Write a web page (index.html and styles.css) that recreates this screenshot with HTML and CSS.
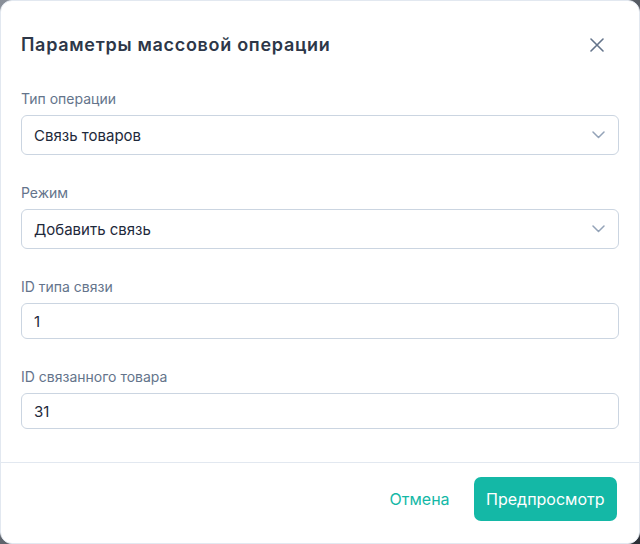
FILE: index.html
```html
<!DOCTYPE html>
<html lang="ru">
<head>
    <meta charset="UTF-8">
    <meta name="viewport" content="width=device-width, initial-scale=1.0">
    <title>Параметры массовой операции</title>
    <link rel="stylesheet" href="styles.css">
</head>
<body>
    <div class="modal">
        <div class="modal-header">
            <h2>Параметры массовой операции</h2>
            <button class="close" type="button" aria-label="Закрыть">
                <svg width="14" height="14" viewBox="0 0 14 14" fill="none" stroke="currentColor" stroke-width="1.6" stroke-linecap="round">
                    <path d="M1 1L13 13M13 1L1 13"/>
                </svg>
            </button>
        </div>
        <form class="modal-body">
            <div class="form-group">
                <label for="op-type">Тип операции</label>
                <div class="select">
                    <span>Связь товаров</span>
                    <svg width="13" height="8" viewBox="0 0 13 8" fill="none" stroke="currentColor" stroke-width="1.5" stroke-linecap="round" stroke-linejoin="round">
                        <path d="M1 1l5.5 5.5L12 1"/>
                    </svg>
                </div>
            </div>
            <div class="form-group">
                <label for="mode">Режим</label>
                <div class="select">
                    <span>Добавить связь</span>
                    <svg width="13" height="8" viewBox="0 0 13 8" fill="none" stroke="currentColor" stroke-width="1.5" stroke-linecap="round" stroke-linejoin="round">
                        <path d="M1 1l5.5 5.5L12 1"/>
                    </svg>
                </div>
            </div>
            <div class="form-group">
                <label for="link-type">ID типа связи</label>
                <input type="text" id="link-type" value="1">
            </div>
            <div class="form-group">
                <label for="linked-id">ID связанного товара</label>
                <input type="text" id="linked-id" value="31">
            </div>
        </form>
        <div class="modal-footer">
            <button class="btn btn-ghost" type="button">Отмена</button>
            <button class="btn btn-primary" type="button">Предпросмотр</button>
        </div>
    </div>
</body>
</html>
```

FILE: styles.css
```css
* {
    box-sizing: border-box;
}

body {
    margin: 0;
    background: linear-gradient(135deg, #8a9099, #2b2f36);
    font-family: Inter, "Noto Sans", sans-serif;
}

.modal {
    width: 640px;
    height: 544px;
    background-color: #fff;
    border: 1px solid #e2e8f0;
    border-radius: 12px;
    display: flex;
    flex-direction: column;
}

.modal-header {
    display: flex;
    align-items: center;
    justify-content: space-between;
    padding: 30px 20px 0 20px;
}

.modal-header h2 {
    margin: 0;
    font-size: 18px;
    line-height: 28px;
    font-weight: 600;
    letter-spacing: 0.7px;
    color: #2d3748;
}

.close {
    border: none;
    background: none;
    padding: 0;
    margin-right: 15px;
    width: 14px;
    height: 14px;
    color: #64748b;
    cursor: pointer;
    display: flex;
}

.modal-body {
    padding: 30px 20px 33px 20px;
    display: flex;
    flex-direction: column;
    gap: 28px;
}

.form-group label {
    display: block;
    font-size: 14px;
    line-height: 20px;
    color: #64748b;
    margin-bottom: 6px;
}

.select,
.form-group input {
    width: 100%;
    border: 1px solid #cbd5e1;
    border-radius: 6px;
    background-color: #fff;
    font-family: inherit;
    font-size: 15px;
    color: #1e293b;
    padding: 0 12px;
}

.select {
    height: 40px;
    display: flex;
    align-items: center;
    justify-content: space-between;
}

.select svg {
    color: #94a3b8;
    margin-right: 1px;
}

.form-group input {
    height: 36px;
    outline: none;
}

.modal-footer {
    margin-top: auto;
    border-top: 1px solid #e2e8f0;
    padding: 14px 22px 23px 20px;
    display: flex;
    justify-content: flex-end;
    gap: 8px;
}

.btn {
    height: 44px;
    border: none;
    border-radius: 7px;
    font-family: inherit;
    font-size: 16px;
    font-weight: 400;
    padding: 0 12.5px;
    cursor: pointer;
}

.btn-ghost {
    background: none;
    color: #14b8a6;
    padding: 0 16px;
}

.btn-primary {
    background-color: #14b8a6;
    color: #fff;
}
```
